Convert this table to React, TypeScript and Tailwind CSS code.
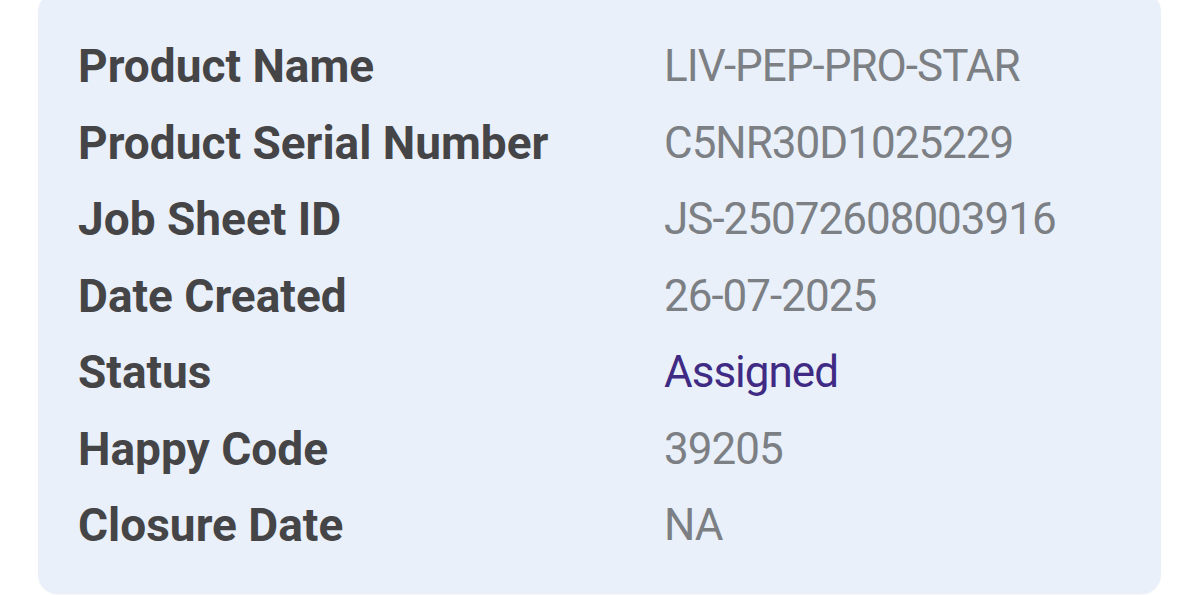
export default function App() {
  const rows: [string, string, boolean?][] = [
    ["Product Name", "LIV-PEP-PRO-STAR"],
    ["Product Serial Number", "C5NR30D1025229"],
    ["Job Sheet ID", "JS-25072608003916"],
    ["Date Created", "26-07-2025"],
    ["Status", "Assigned", true],
    ["Happy Code", "39205"],
    ["Closure Date", "NA"],
  ];
  return (
    <div className="w-[1200px] h-[595px] bg-white overflow-hidden" style={{ fontFamily: "Roboto, 'Liberation Sans', sans-serif" }}>
      <div className="ml-[38px] mt-[-8px] w-[1123px] rounded-[20px] bg-[#e9f0f9] pt-[36px] pb-[30px] pl-[40px] shadow-[0_1px_2px_rgba(0,0,0,0.04)]">
        <div className="grid grid-cols-[586px_1fr] leading-[76.5px]">
          {rows.map(([k, v, purple]) => (
            <div key={k} className="contents">
              <div className="font-bold text-[46px] text-[#454547]">{k}</div>
              <div className={`text-[44px] tracking-[-1px] ${purple ? "text-[#3f2b84]" : "text-[#7c7f83]"}`}>{v}</div>
            </div>
          ))}
        </div>
      </div>
    </div>
  );
}
